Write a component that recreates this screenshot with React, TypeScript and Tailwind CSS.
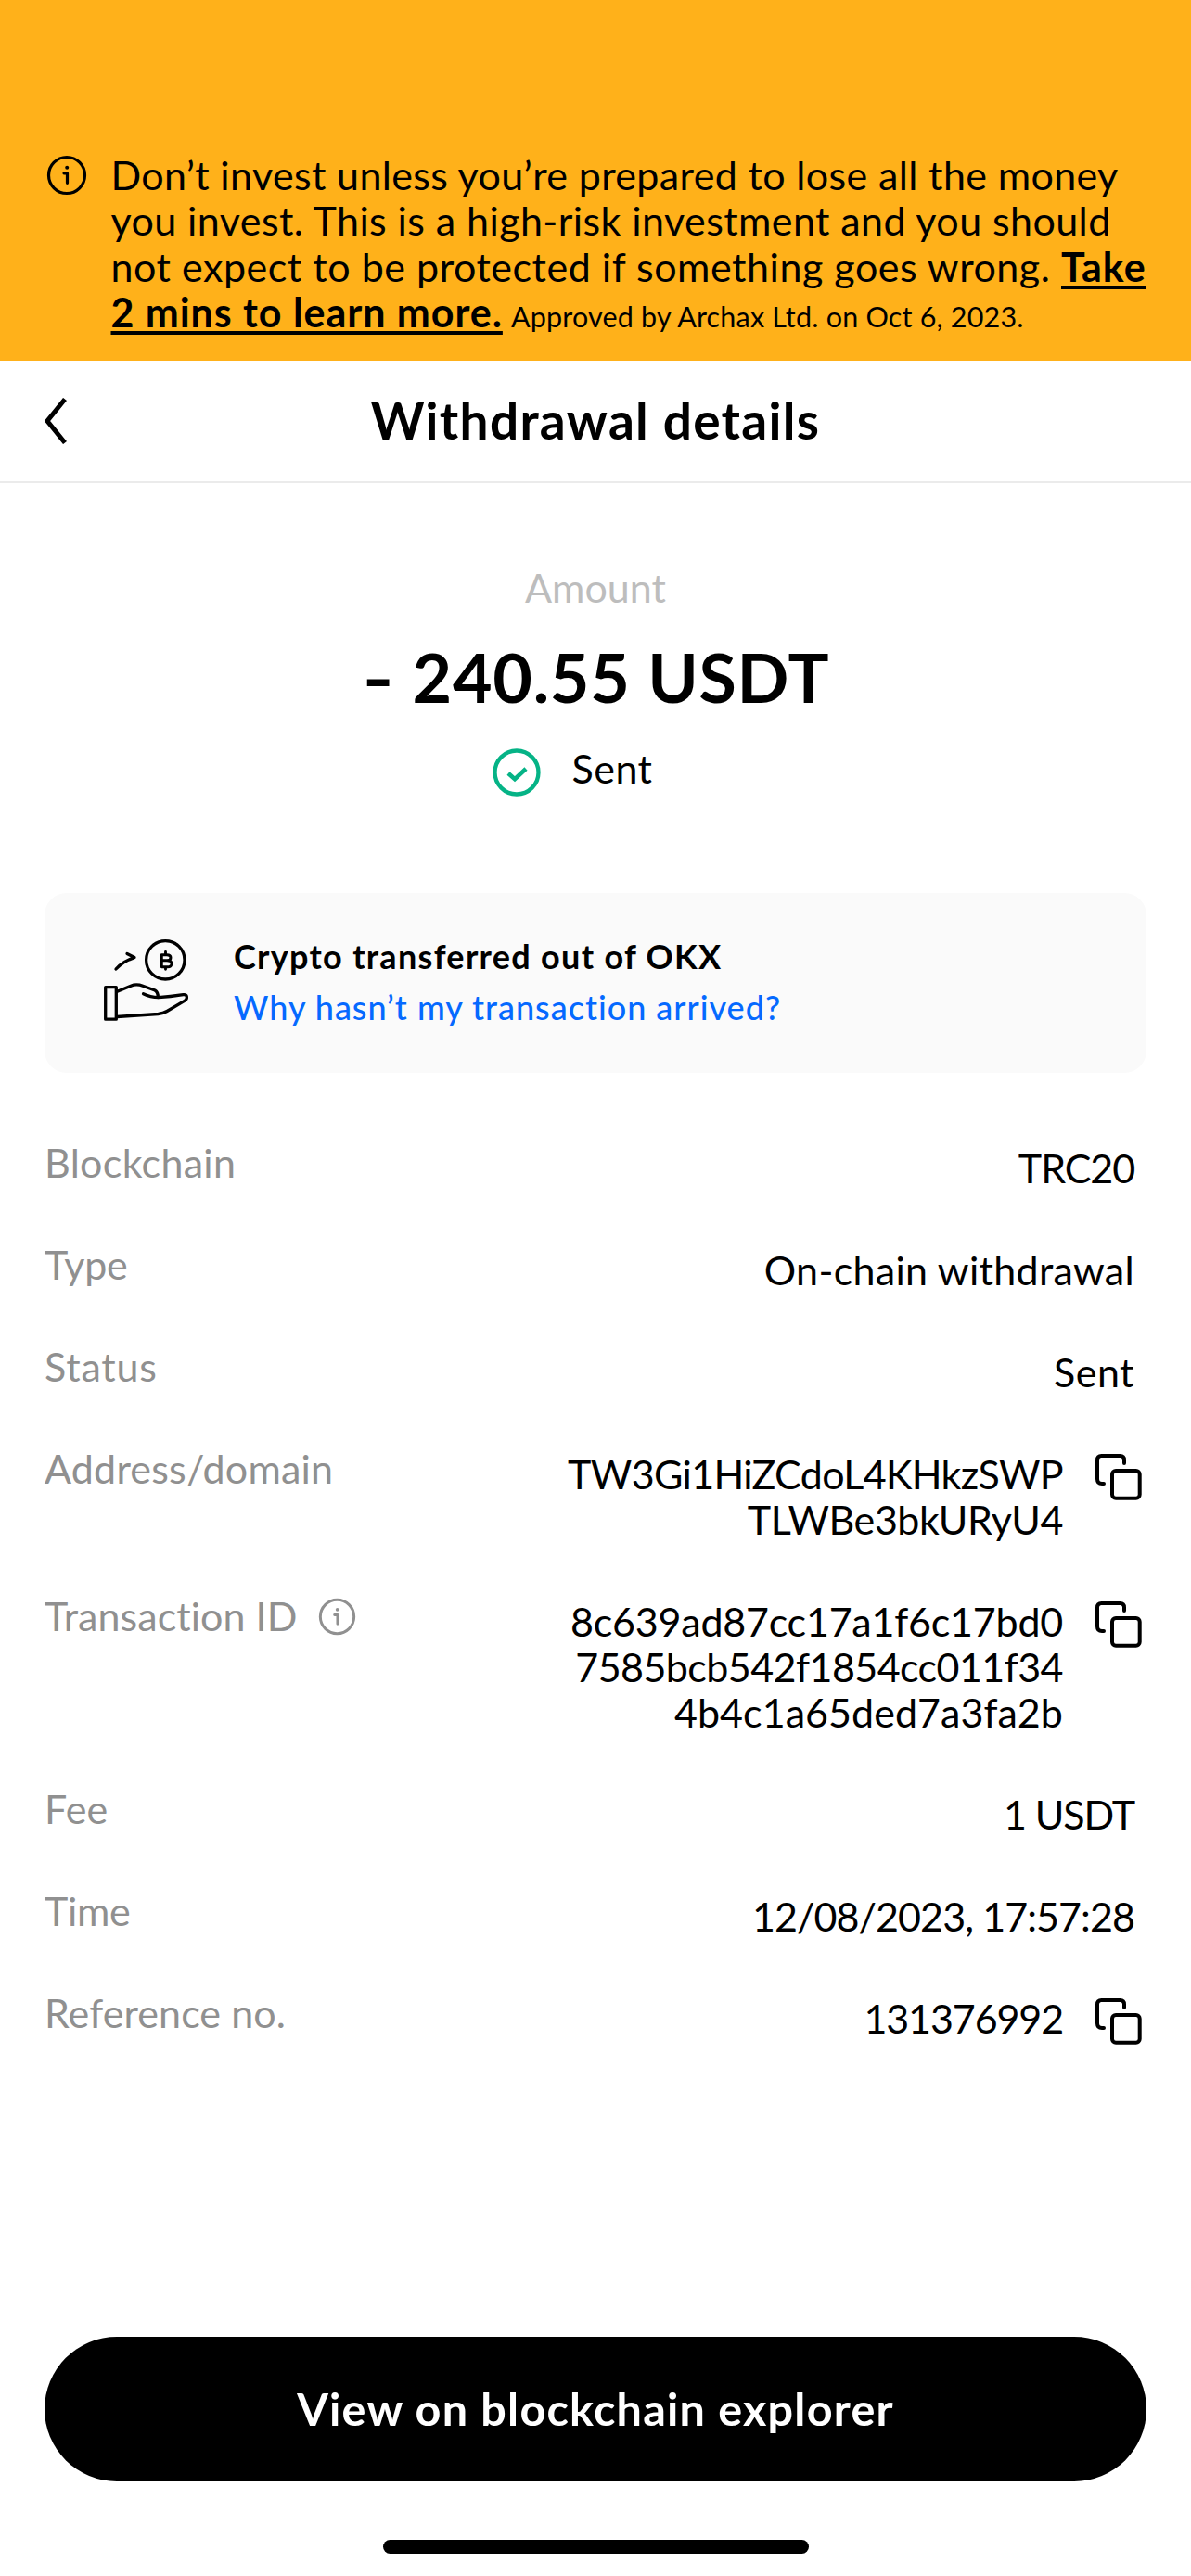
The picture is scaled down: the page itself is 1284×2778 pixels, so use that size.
import type { ReactNode } from "react";

function InfoIcon({ className }: { className: string }) {
  return (
    <svg viewBox="0 0 44 44" fill="none" stroke="currentColor" strokeLinecap="round" strokeLinejoin="round" className={className}>
      <circle cx="22" cy="22" r="19.500" strokeWidth="3.200" />
      <path d="M19 19.800h3.500v10.500" strokeWidth="3.200" />
      <circle cx="22.200" cy="13.700" r="2" fill="currentColor" stroke="none" />
    </svg>
  );
}

function CopyIcon() {
  return (
    <svg viewBox="0 0 50 50" fill="none" stroke="#000" strokeWidth="4" strokeLinecap="round" className="block size-[50px]">
      <path d="M31 10V6.500Q31 2 26.500 2H6.500Q2 2 2 6.500V27Q2 32 7 32H9" />
      <rect x="18" y="18" width="29.700" height="29.700" rx="4" />
    </svg>
  );
}

function HandIcon() {
  return (
    <svg viewBox="0 0 120 120" fill="none" stroke="#000" strokeWidth="3.300" strokeLinecap="round" strokeLinejoin="round" className="block size-[120px]">
      <rect x="13.700" y="64.600" width="11.600" height="34.600" />
      <path d="M25.800 69.500L41 63.200Q47 60.600 54 63.200L67 68Q70.500 70 70.200 75.500" />
      <path d="M54.500 71.700Q62 75.500 71 75.700Q83 74.800 97.500 72.600C102.500 72 102.200 77 99.300 79.200L80 90.500Q76 93 70.500 93.500L26 96.500" />
      <path d="M25 45Q32.500 36.500 44.500 32.800M37 28.500L45 32.500L40.500 34.500" />
      <circle cx="78.300" cy="35.300" r="20.700" />
      <g strokeWidth="2.900">
        <path d="M74.300 29.700H80Q84 29.700 84 32.800Q84 35.800 80 35.800H74.300M80 35.800Q85 35.800 85 39.200Q85 42.800 80.500 42.800H74.300M74.300 29.700V42.800M78.500 26.500V29.500M78.500 43V45.300" />
      </g>
    </svg>
  );
}

type Line = { text: string; track: string };

function Row({ label, track, info, lines, copy }: { label: string; track: string; info?: boolean; lines: Line[]; copy?: boolean }) {
  return (
    <div className="flex justify-between pb-[55px]">
      <div className="flex text-[#909090]">
        <span className={track}>{label}</span>
        {info && <InfoIcon className="mt-[5px] ml-[23px] size-[41px]" />}
      </div>
      <div className="flex">
        <div className={`mt-[6px] flex flex-col items-end text-black ${copy ? "mr-[35px]" : "mr-[13px]"}`}>
          {lines.map((l) => (
            <span key={l.text} className={`whitespace-nowrap ${l.track}`}>{l.text}</span>
          ))}
        </div>
        {copy && (
          <div className="mt-[9px] mr-[5px]">
            <CopyIcon />
          </div>
        )}
      </div>
    </div>
  );
}

function BannerLine({ track, children }: { track: string; children: ReactNode }) {
  return <span className={`block whitespace-nowrap ${track}`}>{children}</span>;
}

export default function App() {
  return (
    <div className="flex h-[2778px] w-[1284px] flex-col overflow-hidden bg-white font-['Lato',sans-serif] text-[43px] leading-[49px] text-black">
      <header className="flex h-[389px] items-start bg-[#FFB11A] pt-[164px]">
        <InfoIcon className="mt-[3px] ml-[50px] size-[44px] shrink-0" />
        <p className="ml-[25.500px] leading-[49.250px]">
          <BannerLine track="tracking-[0.36px]">Don’t invest unless you’re prepared to lose all the money</BannerLine>
          <BannerLine track="tracking-[0.42px]">you invest. This is a high-risk investment and you should</BannerLine>
          <BannerLine track="tracking-[0.53px]">
            not expect to be protected if something goes wrong.{" "}
            <span className="font-bold tracking-[1px] underline decoration-[4px] underline-offset-[4px]">Take</span>
          </BannerLine>
          <BannerLine track="tracking-[0.95px]">
            <span className="font-bold underline decoration-[4px] underline-offset-[4px]">2 mins to learn more.</span>
            <span className="ml-[9px] text-[30.500px] leading-none tracking-[0.2px]">Approved by Archax Ltd. on Oct 6, 2023.</span>
          </BannerLine>
        </p>
      </header>

      <nav className="grid h-[132px] grid-cols-[120px_1fr_120px] items-center border-b-2 border-[#EBEBEB]">
        <svg viewBox="0 0 26 50" fill="none" stroke="#000" strokeWidth="5" strokeLinejoin="miter" className="ml-[47px] h-[50px] w-[26px]">
          <path d="M23 1.500L4 25L23 48.500" />
        </svg>
        <h1 className="-mt-[2px] text-center text-[55px] leading-[66px] font-bold tracking-[1.290px]">Withdrawal details</h1>
      </nav>

      <section className="flex flex-col items-center pt-[88px]">
        <div className="text-[#BDBDBD]">Amount</div>
        <div className="mt-[28px] ml-[4px] text-[73.500px] leading-[88px] font-bold tracking-[0.750px]">
          <span className="mr-[4px] inline-block scale-x-[1.250]">-</span> 240.55 USDT
        </div>
        <div className="mt-[30px] mr-[50px] flex">
          <svg viewBox="0 0 52 52" fill="none" stroke="#05B386" strokeWidth="4.300" strokeLinecap="round" className="mt-[3px] mr-[34px] size-[52px]">
            <circle cx="26" cy="26" r="23.500" />
            <path d="M17 27L24 33.200L36 22" strokeLinecap="butt" strokeWidth="4.600" />
          </svg>
          <span className="tracking-[0.470px]">Sent</span>
        </div>
      </section>

      <section className="mx-[48px] mt-[104px] flex h-[194px] shrink-0 rounded-[24px] bg-[#FAFAFA]">
        <div className="mt-[37px] ml-[52px]">
          <HandIcon />
        </div>
        <div className="mt-[41px] ml-[32px] text-[36px] leading-[55px] whitespace-nowrap">
          <div className="font-bold tracking-[1.300px]">Crypto transferred out of OKX</div>
          <div className="font-medium tracking-[0.990px] text-[#0569FF]">Why hasn’t my transaction arrived?</div>
        </div>
      </section>

      <section className="mt-[72px] px-[48px]">
        <Row label="Blockchain" track="tracking-[0.3px]" lines={[{ text: "TRC20", track: "tracking-[-1.1px]" }]} />
        <Row label="Type" track="tracking-[-0.3px]" lines={[{ text: "On-chain withdrawal", track: "tracking-[0.3px]" }]} />
        <Row label="Status" track="tracking-[0.8px]" lines={[{ text: "Sent", track: "tracking-[0.47px]" }]} />
        <Row
          label="Address/domain"
          track="tracking-[0.2px]"
          copy
          lines={[
            { text: "TW3Gi1HiZCdoL4KHkzSWP", track: "tracking-[-0.67px]" },
            { text: "TLWBe3bkURyU4", track: "tracking-[-0.45px]" },
          ]}
        />
        <Row
          label="Transaction ID"
          track="tracking-[0.05px]"
          info
          copy
          lines={[
            { text: "8c639ad87cc17a1f6c17bd0", track: "tracking-[-0.22px]" },
            { text: "7585bcb542f1854cc011f34", track: "tracking-[-0.56px]" },
            { text: "4b4c1a65ded7a3fa2b", track: "tracking-[0.05px]" },
          ]}
        />
        <Row label="Fee" track="tracking-[0.2px]" lines={[{ text: "1 USDT", track: "tracking-[-1.1px]" }]} />
        <Row label="Time" track="tracking-[-0.3px]" lines={[{ text: "12/08/2023, 17:57:28", track: "tracking-[-0.91px]" }]} />
        <Row label="Reference no." track="tracking-[0.08px]" copy lines={[{ text: "131376992", track: "tracking-[-1.1px]" }]} />
      </section>

      <footer className="mt-auto flex flex-col items-center px-[48px] pb-[24px]">
        <button className="h-[156px] w-full rounded-full bg-black pb-[3px] text-[48.500px] leading-[58px] font-bold tracking-[1.240px] text-white">
          View on blockchain explorer
        </button>
        <div className="mt-[63px] h-[15px] w-[459px] rounded-full bg-black" />
      </footer>
    </div>
  );
}
